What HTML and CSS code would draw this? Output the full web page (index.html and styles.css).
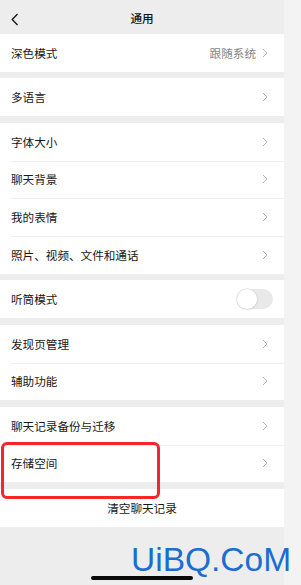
FILE: index.html
```html
<!DOCTYPE html>
<html lang="zh">
<head>
<meta charset="utf-8">
<title>通用</title>
<link rel="stylesheet" href="styles.css">
</head>
<body>
<div class="frame">
  <div class="screen">
    <header class="topbar">
      <svg class="back" width="8" height="13" viewBox="0 0 8 13"><path d="M6.5 1 L1.2 6.5 L6.5 12" fill="none" stroke="#111" stroke-width="1.3"/></svg>
      <div class="title">通用</div>
    </header>

    <section class="group">
      <div class="row"><span class="label">深色模式</span><span class="value">跟随系统</span><svg class="chev" width="6" height="10" viewBox="0 0 6 10"><path d="M1 1 L5 5 L1 9" fill="none" stroke="#b5b5b5" stroke-width="1"/></svg></div>
    </section>

    <section class="group">
      <div class="row"><span class="label">多语言</span><svg class="chev" width="6" height="10" viewBox="0 0 6 10"><path d="M1 1 L5 5 L1 9" fill="none" stroke="#b5b5b5" stroke-width="1"/></svg></div>
    </section>

    <section class="group">
      <div class="row"><span class="label">字体大小</span><svg class="chev" width="6" height="10" viewBox="0 0 6 10"><path d="M1 1 L5 5 L1 9" fill="none" stroke="#b5b5b5" stroke-width="1"/></svg></div>
      <div class="row"><span class="label">聊天背景</span><svg class="chev" width="6" height="10" viewBox="0 0 6 10"><path d="M1 1 L5 5 L1 9" fill="none" stroke="#b5b5b5" stroke-width="1"/></svg></div>
      <div class="row"><span class="label">我的表情</span><svg class="chev" width="6" height="10" viewBox="0 0 6 10"><path d="M1 1 L5 5 L1 9" fill="none" stroke="#b5b5b5" stroke-width="1"/></svg></div>
      <div class="row"><span class="label">照片、视频、文件和通话</span><svg class="chev" width="6" height="10" viewBox="0 0 6 10"><path d="M1 1 L5 5 L1 9" fill="none" stroke="#b5b5b5" stroke-width="1"/></svg></div>
    </section>

    <section class="group">
      <div class="row"><span class="label">听筒模式</span><span class="toggle"><span class="knob"></span></span></div>
    </section>

    <section class="group">
      <div class="row"><span class="label">发现页管理</span><svg class="chev" width="6" height="10" viewBox="0 0 6 10"><path d="M1 1 L5 5 L1 9" fill="none" stroke="#b5b5b5" stroke-width="1"/></svg></div>
      <div class="row"><span class="label">辅助功能</span><svg class="chev" width="6" height="10" viewBox="0 0 6 10"><path d="M1 1 L5 5 L1 9" fill="none" stroke="#b5b5b5" stroke-width="1"/></svg></div>
    </section>

    <section class="group">
      <div class="row"><span class="label">聊天记录备份与迁移</span><svg class="chev" width="6" height="10" viewBox="0 0 6 10"><path d="M1 1 L5 5 L1 9" fill="none" stroke="#b5b5b5" stroke-width="1"/></svg></div>
      <div class="row"><span class="label">存储空间</span><svg class="chev" width="6" height="10" viewBox="0 0 6 10"><path d="M1 1 L5 5 L1 9" fill="none" stroke="#b5b5b5" stroke-width="1"/></svg></div>
    </section>

    <section class="group">
      <div class="row center"><span class="label">清空聊天记录</span></div>
    </section>

    <div class="highlight"></div>
    <div class="watermark">UiBQ.CoM</div>
    <div class="home"></div>
  </div>
  <div class="strip"></div>
</div>
</body>
</html>
```

FILE: styles.css
```css
* { box-sizing: border-box; }
html, body { margin: 0; padding: 0; }
body {
  width: 301px;
  height: 585px;
  overflow: hidden;
  font-family: "Noto Sans CJK SC", "Noto Sans", sans-serif;
  color: #181818;
  background: #f3f3f3;
}
.frame {
  display: flex;
  width: 301px;
  height: 585px;
}
.screen {
  position: relative;
  width: 284px;
  height: 585px;
  background: #ededed;
  display: flex;
  flex-direction: column;
  gap: 6.75px;
}
.strip {
  flex: 1;
  background: #f3f3f3;
}
.topbar {
  height: 34px;
  margin-bottom: -6.75px;
  display: flex;
  align-items: center;
  justify-content: center;
  position: relative;
  background: #ededed;
}
.back {
  position: absolute;
  left: 11px;
  top: 13px;
}
.title {
  font-size: 11.6px;
  font-weight: 500;
  color: #111;
  line-height: 1;
  padding-top: 3px;
}
.group {
  background: #fff;
  display: flex;
  flex-direction: column;
}
.row {
  height: 37.7px;
  display: flex;
  align-items: center;
  padding: 0 16px 0 11px;
  font-size: 11.6px;
  position: relative;
}
.row + .row::before {
  content: "";
  position: absolute;
  left: 11px;
  right: 0;
  top: 0;
  height: 1px;
  background: #efefef;
}
.label { flex: 1; white-space: nowrap; }
.value {
  color: #858585;
  margin-right: 6px;
}
.chev { display: block; }
.row.center { justify-content: center; padding: 0; }
.row.center .label { flex: none; }
.toggle {
  width: 36px;
  height: 20px;
  border-radius: 10px;
  background: #e9e9e9;
  position: relative;
  margin-right: -5px;
}
.knob {
  position: absolute;
  left: 0;
  top: 0;
  width: 20px;
  height: 20px;
  border-radius: 50%;
  background: #fff;
  box-shadow: 0 0 0 0.6px #d6d6d6, 0 1px 2px rgba(0,0,0,0.12);
}
.highlight {
  position: absolute;
  left: 1px;
  top: 442px;
  width: 159px;
  height: 57px;
  border: 3px solid #f5262a;
  border-radius: 6px;
}
.watermark {
  position: absolute;
  left: 131px;
  top: 541px;
  font-family: "Liberation Sans", Arial, sans-serif;
  font-size: 33.5px;
  line-height: 38px;
  color: #1b6dd2;
  white-space: nowrap;
}
.home {
  position: absolute;
  left: 91px;
  top: 576px;
  width: 102px;
  height: 3.5px;
  border-radius: 2px;
  background: #0a0a0a;
}
```
